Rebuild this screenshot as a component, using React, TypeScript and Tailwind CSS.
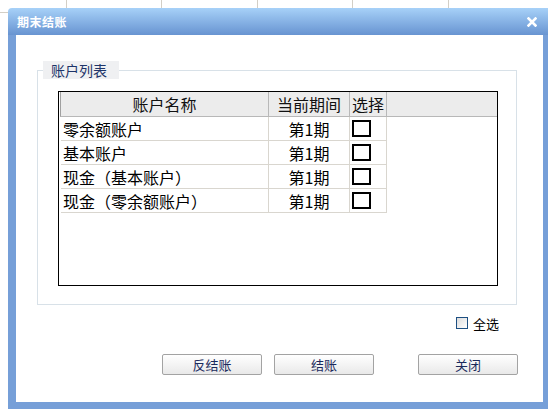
import React from "react";

const rows = [
  { name: "零余额账户", period: "第1期" },
  { name: "基本账户", period: "第1期" },
  { name: "现金（基本账户）", period: "第1期" },
  { name: "现金（零余额账户）", period: "第1期" },
];

const font = { fontFamily: '"Noto Sans CJK SC", "Liberation Sans", sans-serif' };

function Btn({ label }: { label: string }) {
  return (
    <button className="w-[100px] h-[21px] rounded-[2px] border border-[#a3a3a3] bg-gradient-to-b from-[#ffffff] to-[#e9e9e9] text-[13px] leading-none text-[#1b2a5c] flex items-center justify-center">
      {label}
    </button>
  );
}

export default function App() {
  return (
    <div className="relative w-[548px] h-[409px] overflow-hidden bg-white" style={font}>
      {/* desktop background lines */}
      <div className="absolute left-0 top-0 w-[548px] h-[8px] flex">
        <div className="w-[67px] h-full border-r border-[#d3cfc6]" />
        <div className="w-[95px] h-full border-r border-[#d3cfc6]" />
        <div className="w-[96px] h-full border-r border-[#d3cfc6]" />
        <div className="w-[95px] h-full border-r border-[#d3cfc6]" />
        <div className="w-[96px] h-full border-r border-[#d3cfc6]" />
      </div>
      <div className="absolute left-0 top-[12px] w-[8px] h-px bg-[#d3cfc6]" />

      {/* dialog window */}
      <div className="absolute left-[8px] top-[8px] w-[543px] h-[402px] flex flex-col">
        <div className="h-[27px] rounded-t-[4px] bg-gradient-to-b from-[#a7d1f8] to-[#6894d1] flex items-center justify-between pl-[9px] pr-[14px]">
          <span className="text-white font-bold text-[12px] tracking-[0.5px] leading-none">期末结账</span>
          <svg width="10" height="10" viewBox="0 0 10 10">
            <path d="M1.5 1.5 L8.5 8.5 M8.5 1.5 L1.5 8.5" stroke="#ffffff" strokeWidth="2.6" strokeLinecap="square" />
          </svg>
        </div>
        <div className="flex-1 border-[8px] border-t-0 border-[#769fd8] bg-white flex flex-col">
          <div className="pt-[35px] pl-[21px]">
            <div className="relative w-[480px] h-[235px] border border-[#d8e1e8] pt-[20px] pl-[20px]">
              <div className="absolute left-[5px] top-[-10px] w-[76px] h-[18px] bg-[#eff0f2] flex items-center pl-[8px] text-[14px] leading-none text-[#1d3469]">
                账户列表
              </div>
              <div className="w-[440px] h-[195px] border border-black">
                <div className="flex h-[25px] bg-[#ececec] border-b border-[#b8b8b8] border-l border-l-[#a0a0a0] ml-px text-[16px] text-[#111]">
                  <div className="w-[208px] border-r border-[#b8b8b8] flex items-center justify-center">账户名称</div>
                  <div className="w-[81px] border-r border-[#b8b8b8] flex items-center justify-center">当前期间</div>
                  <div className="w-[37px] border-r border-[#b8b8b8] flex items-center justify-center">选择</div>
                </div>
                {rows.map((r) => (
                  <div key={r.name} className="flex h-[24px] ml-px border-l border-transparent text-[16px] text-black">
                    <div className="w-[208px] border-r border-b border-[#d9d6cf] flex items-center pl-[2px]">{r.name}</div>
                    <div className="w-[81px] border-r border-b border-[#d9d6cf] flex items-center justify-center">{r.period}</div>
                    <div className="w-[37px] border-r border-b border-[#d9d6cf] flex items-center pl-[2px]">
                      <div className="w-[19px] h-[17px] border-2 border-black bg-white" />
                    </div>
                  </div>
                ))}
              </div>
            </div>
          </div>
          <div className="flex items-center justify-end pr-[44px] mt-[12px] h-[12px] gap-[5px]">
            <div className="w-[12px] h-[12px] border border-[#1d4f82] bg-gradient-to-br from-[#dcdcdc] to-[#ffffff]" />
            <span className="text-[13px] leading-none text-black">全选</span>
          </div>
          <div className="flex mt-[25px] pl-[146px]">
            <Btn label="反结账" />
            <div className="w-[12px]" />
            <Btn label="结账" />
            <div className="w-[44px]" />
            <Btn label="关闭" />
          </div>
        </div>
      </div>
    </div>
  );
}
